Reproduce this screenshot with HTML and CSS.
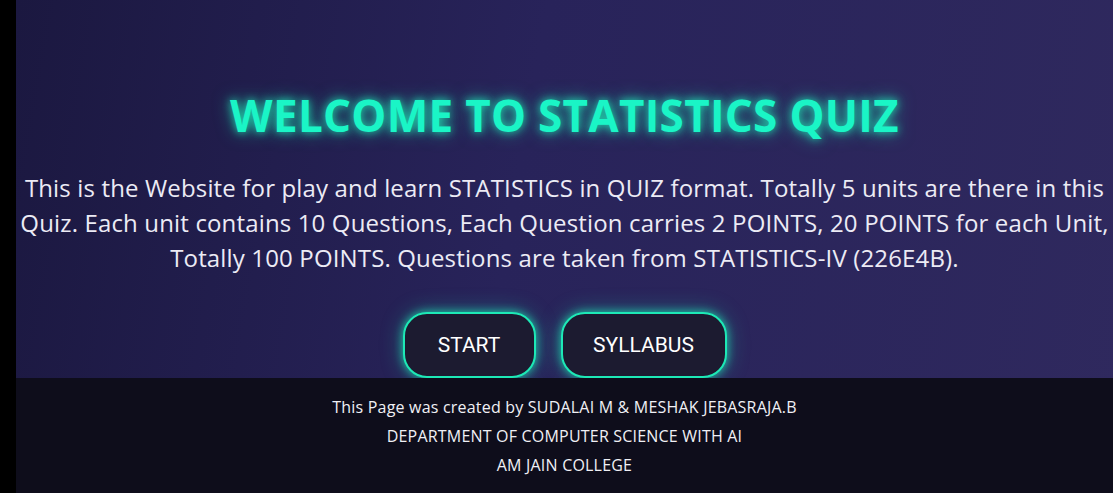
FILE: index.html
```html
<!DOCTYPE html>
<html>
<head>
<meta charset="utf-8">
<link rel="stylesheet" href="styles.css">
</head>
<body>
<div class="page">
  <main class="hero">
    <h1 class="title">WELCOME TO STATISTICS QUIZ</h1>
    <p class="intro">This is the Website for play and learn STATISTICS in QUIZ format. Totally 5 units are there in this<br>Quiz. Each unit contains 10 Questions, Each Question carries 2 POINTS, 20 POINTS for each Unit,<br>Totally 100 POINTS. Questions are taken from STATISTICS-IV (226E4B).</p>
    <div class="actions">
      <button class="btn btn-start">START</button>
      <button class="btn btn-syllabus">SYLLABUS</button>
    </div>
  </main>
  <footer class="footer">
    <p>This Page was created by SUDALAI M &amp; MESHAK JEBASRAJA.B</p>
    <p>DEPARTMENT OF COMPUTER SCIENCE WITH AI</p>
    <p>AM JAIN COLLEGE</p>
  </footer>
</div>
</body>
</html>
```

FILE: styles.css
```css
html, body {
  margin: 0;
  padding: 0;
  height: 100%;
  background: #000;
  overflow: hidden;
}
.page {
  margin-left: 16px;
  height: 493px;
  display: flex;
  flex-direction: column;
  font-family: "Open Sans", sans-serif;
  background: linear-gradient(100deg, #1b1840 0%, #28235a 45%, #2f295e 100%);
}
.hero {
  flex: 1;
  display: flex;
  flex-direction: column;
  align-items: center;
  padding-top: 90px;
}
.title {
  margin: 0;
  font-size: 44px;
  font-weight: 700;
  color: #1af5c6;
  text-shadow: 0 0 8px rgba(29, 233, 182, 0.9), 0 0 18px rgba(29, 233, 182, 0.6);
  line-height: 50px;
  letter-spacing: 0.3px;
}
.intro {
  margin: 30px 0 0;
  text-align: center;
  color: #ecebf5;
  font-size: 24px;
  line-height: 35px;
  letter-spacing: 0.15px;
  white-space: nowrap;
}
.actions {
  display: flex;
  gap: 25px;
  margin-top: 37px;
}
.btn {
  font-family: Roboto, sans-serif;
  font-size: 21px;
  color: #fff;
  background: #1c1b30;
  border: 2px solid #1de9b6;
  border-radius: 24px;
  height: 66px;
  box-shadow: 0 0 10px rgba(29, 233, 182, 0.8), 0 0 22px rgba(29, 233, 182, 0.35);
  cursor: pointer;
}
.btn-start { width: 133px; }
.btn-syllabus { width: 166px; }
.footer {
  position: relative;
  z-index: 1;
  height: 115px;
  background: #0e0d1b;
  color: #f0f0f5;
  font-size: 16px;
  letter-spacing: 0.2px;
  text-align: center;
  padding-top: 15px;
  box-sizing: border-box;
}
.footer p {
  margin: 0;
  line-height: 29px;
}
```
